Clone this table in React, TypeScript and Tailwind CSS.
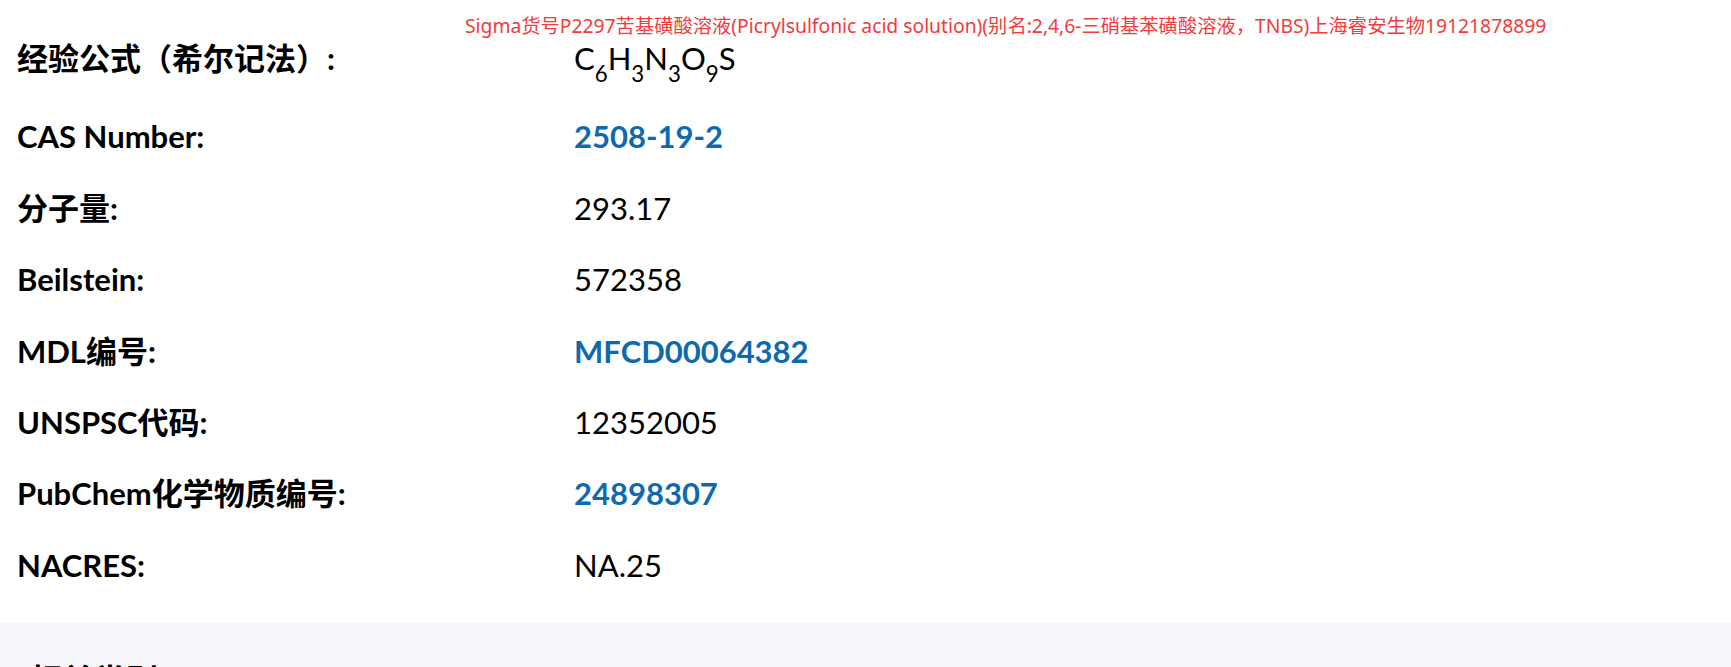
import React from 'react';

type Row = { label: string; value: React.ReactNode; link?: boolean };

const sub = 'text-[0.72em] align-[-0.26em] leading-none';

const rows: Row[] = [
    {
        label: '经验公式（希尔记法）:',
        value: (
            <>
                C<sub className={sub}>6</sub>H<sub className={sub}>3</sub>N<sub className={sub}>3</sub>O<sub className={sub}>9</sub>S
            </>
        ),
    },
    { label: 'CAS Number:', value: '2508-19-2', link: true },
    { label: '分子量:', value: '293.17' },
    { label: 'Beilstein:', value: '572358' },
    { label: 'MDL编号:', value: 'MFCD00064382', link: true },
    { label: 'UNSPSC代码:', value: '12352005' },
    { label: 'PubChem化学物质编号:', value: '24898307', link: true },
    { label: 'NACRES:', value: 'NA.25' },
];

const font = { fontFamily: 'Lato, "Noto Sans CJK SC", sans-serif' };

export default function App() {
    return (
        <div className="relative w-full h-[667px] bg-white overflow-hidden" style={font}>
            {/* watermark-style banner over the table */}
            <div
                className="absolute top-[15px] left-[465px] text-[19.3px] leading-[22px] text-[#f23b3b] whitespace-nowrap"
                style={{ fontFamily: '"Noto Sans", "Noto Sans CJK SC", sans-serif' }}
            >
                Sigma货号P2297苦基磺酸溶液(Picrylsulfonic acid solution)(别名:2,4,6-三硝基苯磺酸溶液，TNBS)上海睿安生物19121878899
            </div>

            <div className="pt-[16px] pb-[22px] pl-[17px]">
                {rows.map((row, i) => (
                    <div
                        key={row.label}
                        className={`grid grid-cols-[557px_1fr] items-center ${i === 0 ? 'h-[85px]' : 'h-[71.4px]'}`}
                    >
                        <div className="text-[31px] font-bold text-black">{row.label}</div>
                        <div
                            className={
                                row.link
                                    ? 'text-[31px] font-bold text-[#0f69af]'
                                    : 'text-[31px] text-black'
                            }
                        >
                            {row.value}
                        </div>
                    </div>
                ))}
            </div>

            <section className="bg-[#f6f6fa] pt-[33px] pb-10 pl-[30px]">
                <h2 className="text-[32px] font-bold text-black">相关类别</h2>
            </section>
        </div>
    );
}
